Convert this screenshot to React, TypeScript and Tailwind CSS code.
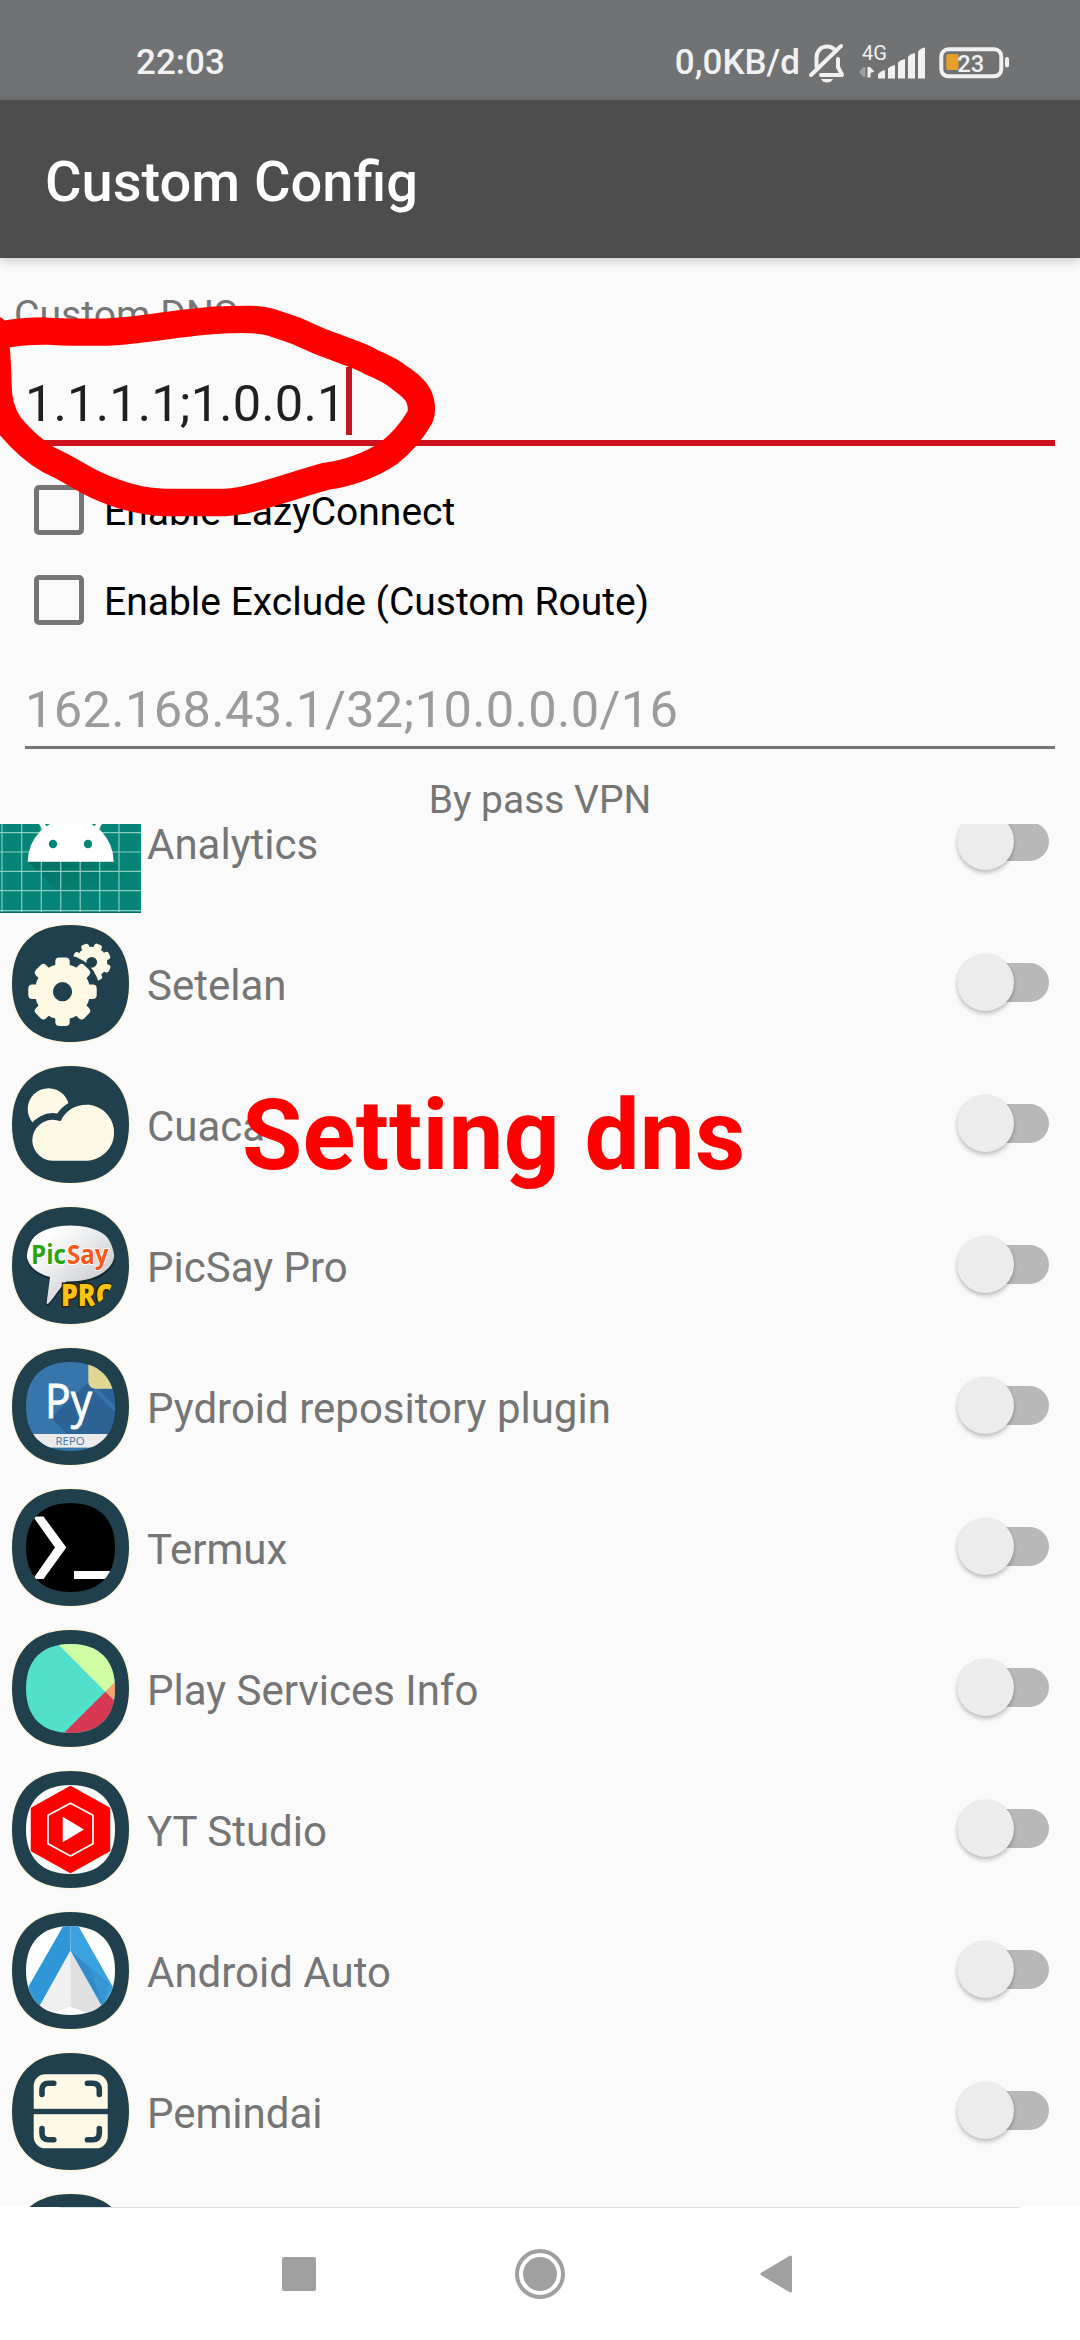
import type { ReactNode } from 'react';

const DARK = '#21404d';
const CREAM = '#fef9e5';
const OUTER =
  'M70.5 12 C108 12 129 33 129 70.5 S108 129 70.5 129 S12 108 12 70.5 S33 12 70.5 12Z';
const INNER =
  'M70.5 26 C99 26 115 42 115 70.5 S99 115 70.5 115 S26 99 26 70.5 S42 26 70.5 26Z';

function IconBase({ children }: { children?: ReactNode }) {
  return (
    <svg viewBox="0 0 141 141" className="size-[141px] shrink-0">
      <path d={OUTER} fill={DARK} stroke="#fdf6df" strokeWidth="3" paintOrder="stroke" />
      {children}
    </svg>
  );
}

function Clipped({ id, children }: { id: string; children: ReactNode }) {
  return (
    <IconBase>
      <clipPath id={id}>
        <path d={INNER} />
      </clipPath>
      <g clipPath={`url(#${id})`}>{children}</g>
    </IconBase>
  );
}

function AnalyticsIcon() {
  const xs = [2, 21.7, 41.3, 60.7, 80.2, 99.7, 119];
  const ys = [60.7, 80, 99.3, 118.7, 138.7];
  return (
    <svg viewBox="0 0 141 141" className="size-[141px] shrink-0">
      <defs>
        <linearGradient id="headShadow" x1="0" y1="0" x2="0.7" y2="1">
          <stop offset="0" stopColor="#00574b" stopOpacity="0.75" />
          <stop offset="0.7" stopColor="#00574b" stopOpacity="0" />
        </linearGradient>
      </defs>
      <rect width="141" height="141" fill="#048577" />
      <path d="M28 89.7 L79 141 H141 V117 L113.7 89.7Z" fill="url(#headShadow)" opacity="0.6" />
      {xs.map((x) => (
        <line key={x} x1={x} x2={x} y1="0" y2="141" stroke="#8ccac2" strokeWidth="1.2" />
      ))}
      {ys.map((y) => (
        <line key={y} x1="0" x2="141" y1={y} y2={y} stroke="#8ccac2" strokeWidth="1.2" />
      ))}
      <path d="M0 140.5H141" stroke="#046b60" />
      <path d="M27.7 89.7 A43 43 0 0 1 113.7 89.7Z" fill="#fff" />
      <path d="M38 46 L46 58 M103 46 L95 58" stroke="#fff" strokeWidth="5" strokeLinecap="round" />
      <circle cx="53" cy="72" r="4.2" fill="#048577" />
      <circle cx="88" cy="72" r="4.2" fill="#048577" />
    </svg>
  );
}

const ANGLES = [0, 45, 90, 135, 180, 225, 270, 315];

function SettingsIcon() {
  return (
    <IconBase>
      <g fill={CREAM} transform="translate(91.7 49.3) rotate(22)">
        <circle r="15.5" />
        {ANGLES.map((a) => (
          <rect key={a} x="-4" y="-19.3" width="8" height="10" rx="2.6" transform={`rotate(${a})`} />
        ))}
      </g>
      <circle cx="91.7" cy="49.3" r="5.4" fill={DARK} />
      <circle cx="62.5" cy="78.7" r="37.3" fill={DARK} />
      <g fill={CREAM} transform="translate(62.5 78.7)">
        <circle r="27.8" />
        {ANGLES.map((a) => (
          <rect key={a} x="-7.2" y="-34.2" width="14.4" height="18" rx="4" transform={`rotate(${a})`} />
        ))}
      </g>
      <circle cx="62.5" cy="78.7" r="9.6" fill={DARK} />
    </IconBase>
  );
}

function WeatherIcon() {
  const cloud =
    'M52.5 106.7 A20.5 20.5 0 1 1 60.5 67.2 A28 28 0 1 1 92 106 Q90 106.7 87 106.7Z';
  return (
    <IconBase>
      <circle cx="48.5" cy="55" r="20.8" fill={CREAM} />
      <path d={cloud} fill={DARK} stroke={DARK} strokeWidth="13" />
      <path d={cloud} fill={CREAM} />
    </IconBase>
  );
}

function PicSayIcon() {
  return (
    <Clipped id="picsay">
      <linearGradient id="bubble" x1="0" y1="0" x2="1" y2="1">
        <stop offset="0.2" stopColor="#ffffff" />
        <stop offset="1" stopColor="#b9bbc0" />
      </linearGradient>
      <path
        d="M70.5 33 C98 33 115.5 44 115.5 60 C115.5 77 96 89 67 88.5 C60 95 54 105 48 111 L45.5 110 L49.5 84 C34 80 26 70 26 60 C26 44 44 33 70.5 33Z"
        fill="#0e1d24"
        opacity="0.7"
      />
      <path
        d="M70.5 30.5 C97 30.5 114.5 42 114.5 58.5 C114.5 75 95 87 66.5 86.5 C60 92 54 103 48 109 L46.5 108.5 L50 82 C35 78 26.5 69 26.5 58.5 C26.5 42 45 30.5 70.5 30.5Z"
        fill="url(#bubble)"
      />
      <g fontFamily="'Open Sans', 'Noto Sans', sans-serif" fontWeight="700">
        <text x="31" y="68.5" fontSize="26" fill="#2ba30d" stroke="#fff" strokeWidth="2" paintOrder="stroke" textLength="35" lengthAdjust="spacingAndGlyphs">
          Pic
        </text>
        <text x="67" y="68.5" fontSize="26" fill="#f9571b" stroke="#fff" strokeWidth="2" paintOrder="stroke" textLength="41.5" lengthAdjust="spacingAndGlyphs">
          Say
        </text>
        <text x="61" y="111" fontSize="30" fontWeight="800" fill="#fbc30d" stroke="#2a2208" strokeWidth="3" paintOrder="stroke" textLength="56" lengthAdjust="spacingAndGlyphs">
          PRO
        </text>
      </g>
    </Clipped>
  );
}

function PydroidIcon() {
  return (
    <Clipped id="pydroid">
      <rect x="20" y="20" width="100" height="100" fill="#3776ab" />
      <path d="M51 82 L70 101 H120 V78 L88 47 L73 60Z" fill="#2c6394" />
      <path d="M96 53 H120 V80Z" fill="#2c6394" />
      <path d="M95 53 L120 78" stroke="#3776ab" strokeWidth="4" />
      <path d="M88.3 20 V46 Q89 52.7 96 52.7 H120 V20Z" fill="#e0d793" />
      <rect x="20" y="98" width="100" height="13.6" fill="#ebebeb" />
      <g fontFamily="'Open Sans', 'Noto Sans', sans-serif">
        <text x="45" y="82.3" fontSize="47" fill="#fff" stroke="#fff" strokeWidth="0.8" textLength="47" lengthAdjust="spacingAndGlyphs">
          Py
        </text>
        <text x="55.6" y="109" fontSize="11.5" fill="#3e78ab" textLength="29" lengthAdjust="spacingAndGlyphs">
          REPO
        </text>
      </g>
    </Clipped>
  );
}

function TermuxIcon() {
  return (
    <Clipped id="termux">
      <rect x="20" y="20" width="100" height="100" fill="#000" />
      <path d="M33 39.5 H43.5 L66.3 70.5 L43.5 102 H33 L55 70.5Z" fill="#fff" />
      <rect x="74" y="94" width="40" height="8" fill="#fff" />
    </Clipped>
  );
}

function PlayIcon() {
  return (
    <Clipped id="play">
      <rect x="20" y="20" width="100" height="100" fill="#52dfcb" />
      <path d="M52 20 L105.3 73.7 L120 59 V20Z" fill="#d0fda4" />
      <path d="M105.3 73.7 L120 59 V88.4Z" fill="#fba071" />
      <path d="M105.3 73.7 L59 120 H120 V88.4Z" fill="#d53850" />
    </Clipped>
  );
}

function StudioIcon() {
  return (
    <Clipped id="studio">
      <rect x="20" y="20" width="100" height="100" fill="#fff" />
      <path
        d="M70.5 28 L109 49.5 V91.5 L70.5 113 L32 91.5 V49.5Z"
        fill="#fe0000"
        stroke="#fe0000"
        strokeWidth="2.5"
        strokeLinejoin="round"
      />
      <path
        d="M70.5 44.2 L93 56.2 V84.8 L70.5 97 L48 84.8 V56.2Z"
        fill="none"
        stroke="#fff"
        strokeWidth="1.7"
        strokeLinejoin="round"
      />
      <path d="M62.7 57.7 L84 70.5 L62.7 83.3Z" fill="#fff" />
    </Clipped>
  );
}

function AutoIcon() {
  return (
    <Clipped id="auto">
      <rect x="20" y="20" width="100" height="100" fill="#fff" />
      <path d="M70.5 20 H66.7 L20 101.3 L38 109 L70.5 50.7Z" fill="#2f97d8" />
      <path d="M70.5 20 H75 L121 101.3 L103 109 L70.5 50.7Z" fill="#3aa3de" />
      <path d="M70.5 50.7 L109 84 L104 108Z" fill="#3489cb" />
      <path d="M90 68 L116 92 L104 109Z" fill="#3aa3de" opacity="0.5" />
      <path d="M70.5 50.7 L38 109 L43 112 L54 112.5 L70.5 106.7Z" fill="#f0f0f0" />
      <path d="M70.5 50.7 L103 109 L98 112 L87 112.5 L70.5 106.7Z" fill="#e0e0e0" />
    </Clipped>
  );
}

function ScannerIcon() {
  return (
    <IconBase>
      <rect x="33.7" y="33.3" width="74" height="74" rx="11.5" fill={CREAM} />
      <rect x="33" y="67.8" width="76" height="5.4" fill={DARK} />
      <path
        d="M42 53.5 V49 Q42 42.3 48.7 42.3 H53.8 M87.4 42.3 H92.6 Q99.3 42.3 99.3 49 V53.5 M99.3 87.5 V92 Q99.3 98.7 92.6 98.7 H87.4 M53.8 98.7 H48.7 Q42 98.7 42 92 V87.5"
        fill="none"
        stroke={DARK}
        strokeWidth="5.6"
        strokeLinecap="round"
      />
    </IconBase>
  );
}

const apps: { name: string; icon: ReactNode }[] = [
  { name: 'Analytics', icon: <AnalyticsIcon /> },
  { name: 'Setelan', icon: <SettingsIcon /> },
  { name: 'Cuaca', icon: <WeatherIcon /> },
  { name: 'PicSay Pro', icon: <PicSayIcon /> },
  { name: 'Pydroid repository plugin', icon: <PydroidIcon /> },
  { name: 'Termux', icon: <TermuxIcon /> },
  { name: 'Play Services Info', icon: <PlayIcon /> },
  { name: 'YT Studio', icon: <StudioIcon /> },
  { name: 'Android Auto', icon: <AutoIcon /> },
  { name: 'Pemindai', icon: <ScannerIcon /> },
];

function Toggle() {
  return (
    <div className="mb-[2px] ml-auto mr-[31px] flex h-[39px] w-[82px] shrink-0 items-center rounded-full bg-[#b8b8b8]">
      <div className="-ml-[10px] size-[57px] shrink-0 rounded-full bg-[#ececec] shadow-[0_3px_4px_rgba(0,0,0,0.22),0_0_2px_rgba(0,0,0,0.1)]" />
    </div>
  );
}

function CheckRow({ label }: { label: string }) {
  return (
    <div className="flex h-[90px] items-center pl-[34px]">
      <div className="size-[50px] rounded-[5px] border-[5px] border-[#757575]" />
      <span className="ml-[20px] mt-[5px] text-[39px] text-black">{label}</span>
    </div>
  );
}

function StatusBar() {
  return (
    <div className="flex h-[100px] shrink-0 items-center bg-[#717274] pt-[25px] text-[35px] font-medium text-[#f1f1f1]">
      <span className="ml-[136px] mt-[2px]">22:03</span>
      <span className="ml-auto mt-[2px]">0,0KB/d</span>
      <svg viewBox="0 0 202 44" className="ml-[8px] mr-[70px] h-[44px] w-[202px]" fill="#f1f1f1">
        <g fill="none" stroke="#f1f1f1" strokeWidth="4" strokeLinejoin="round" strokeLinecap="round">
          <path d="M8.5 26 V17 C8.5 10 13 5.5 19 5.5 C23 5.5 26 7.5 28 10" />
          <path d="M30 18 V26 L34 34 H13" />
          <path d="M3 34 L33 5" />
        </g>
        <path d="M13 38 H25 Q23 41.5 19 41.5 Q15 41.5 13 38Z" />
        <text x="54" y="18.5" fontSize="20" fontWeight="400" textLength="25" lengthAdjust="spacingAndGlyphs">
          4G
        </text>
        <path d="M51 31 L56 25.5 V36.5Z M55 26 H57.5 V36 H55Z" opacity="0.35" />
        <path d="M59.5 26 H62 L66.5 30.5 L62.5 32 V36.5 H59.5Z" />
        <path d="M70 33 Q73 29.5 77 29 V37.5 H70Z" />
        <path d="M80 27.5 Q82.5 24.5 87 24 V37.5 H80Z" />
        <path d="M90 21.5 Q92.5 18.5 97 18 V37.5 H90Z" />
        <path d="M100 15.5 Q102.5 12.5 107 12 V37.5 H100Z" />
        <path d="M110 10.5 Q112.5 7 117 6.5 V37.5 H110Z" />
        <rect x="133.3" y="8.3" width="60" height="27" rx="7" fill="none" stroke="#f1f1f1" strokeWidth="4" />
        <rect x="138.3" y="13" width="12.3" height="16" rx="2" fill="#e5a02b" />
        <text x="149.3" y="31.2" fontSize="24" fontWeight="500" textLength="27" lengthAdjust="spacingAndGlyphs">
          23
        </text>
        <rect x="197" y="16" width="4" height="10.5" rx="2" />
      </svg>
    </div>
  );
}

export default function App() {
  return (
    <div className="relative flex h-[2340px] w-[1080px] flex-col overflow-hidden bg-[#fafafa] font-['Roboto',sans-serif]">
      <StatusBar />
      <header className="flex h-[158px] shrink-0 items-center bg-[#4d4d4d] pl-[45px] pt-[5px] shadow-[0_3px_10px_rgba(0,0,0,0.2)]">
        <h1 className="text-[56px] font-medium text-white">Custom Config</h1>
      </header>

      <div className="shrink-0 pt-[34px] pl-[14px] text-[39.2px] leading-[46px] text-[#757575]">
        Custom DNS
      </div>
      <div className="ml-[25px] flex h-[108px] w-[1030px] shrink-0 items-start border-b-[6px] border-[#ce121d] pt-[32px] text-[50.6px] leading-[68px] tracking-[0.15px] text-[#202020]">
        <span>1.1.1.1;1.0.0.1</span>
        <span className="-mt-[3px] ml-[1px] h-[68px] w-[6px] shrink-0 bg-[#c1171f]" />
      </div>
      <div className="mt-[19px] shrink-0">
        <CheckRow label="Enable LazyConnect" />
        <CheckRow label="Enable Exclude (Custom Route)" />
      </div>
      <div className="ml-[25px] h-[104px] w-[1030px] shrink-0 border-b-[3px] border-[#757575] pt-[35px] text-[50.6px] leading-[60px] tracking-[0.33px] text-[#9b9b9b]">
        162.168.43.1/32;10.0.0.0/16
      </div>
      <div className="h-[75px] shrink-0 pt-[26px] text-center text-[39px] leading-[50px] text-[#757575]">
        By pass VPN
      </div>

      <div className="h-[1383px] shrink-0 overflow-hidden">
        <div className="-mt-[52px]">
          {apps.map((app) => (
            <div key={app.name} className="flex h-[141px] items-center">
              {app.icon}
              <span className="ml-[6px] mt-[4px] text-[42px] text-[#757575]">{app.name}</span>
              <Toggle />
            </div>
          ))}
          <div className="flex h-[141px]">
            <IconBase />
          </div>
        </div>
      </div>

      <nav className="flex h-[133px] shrink-0 flex-col bg-white">
        <div className="mx-[60px] h-px bg-[#dedede]" />
        <div className="flex grow items-center pl-[282px]">
          <div className="size-[34px] rounded-[2px] bg-[#a0a0a0]" />
          <svg viewBox="0 0 50 50" className="ml-[199px] size-[50px]">
            <circle cx="25" cy="25" r="23" fill="none" stroke="#a0a0a0" strokeWidth="4" />
            <circle cx="25" cy="25" r="17" fill="#a0a0a0" />
          </svg>
          <svg viewBox="0 0 32 38" className="ml-[195px] h-[38px] w-[32px]">
            <path d="M2 19 L30.5 2 V36Z" fill="#a0a0a0" stroke="#a0a0a0" strokeWidth="3" strokeLinejoin="round" />
          </svg>
        </div>
      </nav>

      <svg viewBox="0 0 450 230" className="pointer-events-none absolute left-0 top-[300px] h-[230px] w-[450px]">
        <path
          d="M-12 38 C10 32 28 31 45 31 C70 33 90 32 107 32 C140 31 180 22 220 20 C240 19.5 255 18 270 22 C285 27 295 30 301 33 C312 38 322 43 335 47 C350 53 362 56 371 62 C383 67 393 72 400 78 C410 85 416 90 419 97 C422 105 422 112 420 117 C412 131 403 142 389 153 C370 166 345 174 327 176 C305 182 285 189 260 196 C245 200 238 202 225 202.5 H165 C145 202 120 196 96 185 C80 177 65 167 49 160 C35 152 20 138 10 126 C-1 110 -2 95 -2 85 C-2 65 -4 50 -5 30"
          fill="none"
          stroke="#fe0000"
          strokeWidth="27.3"
          strokeLinejoin="round"
          strokeLinecap="round"
        />
      </svg>
      <div className="absolute left-[242px] top-[1080px] whitespace-nowrap text-[98px] font-bold leading-[112px] tracking-[0.2px] text-[#fe0000]">
        Setting dns
      </div>
    </div>
  );
}
